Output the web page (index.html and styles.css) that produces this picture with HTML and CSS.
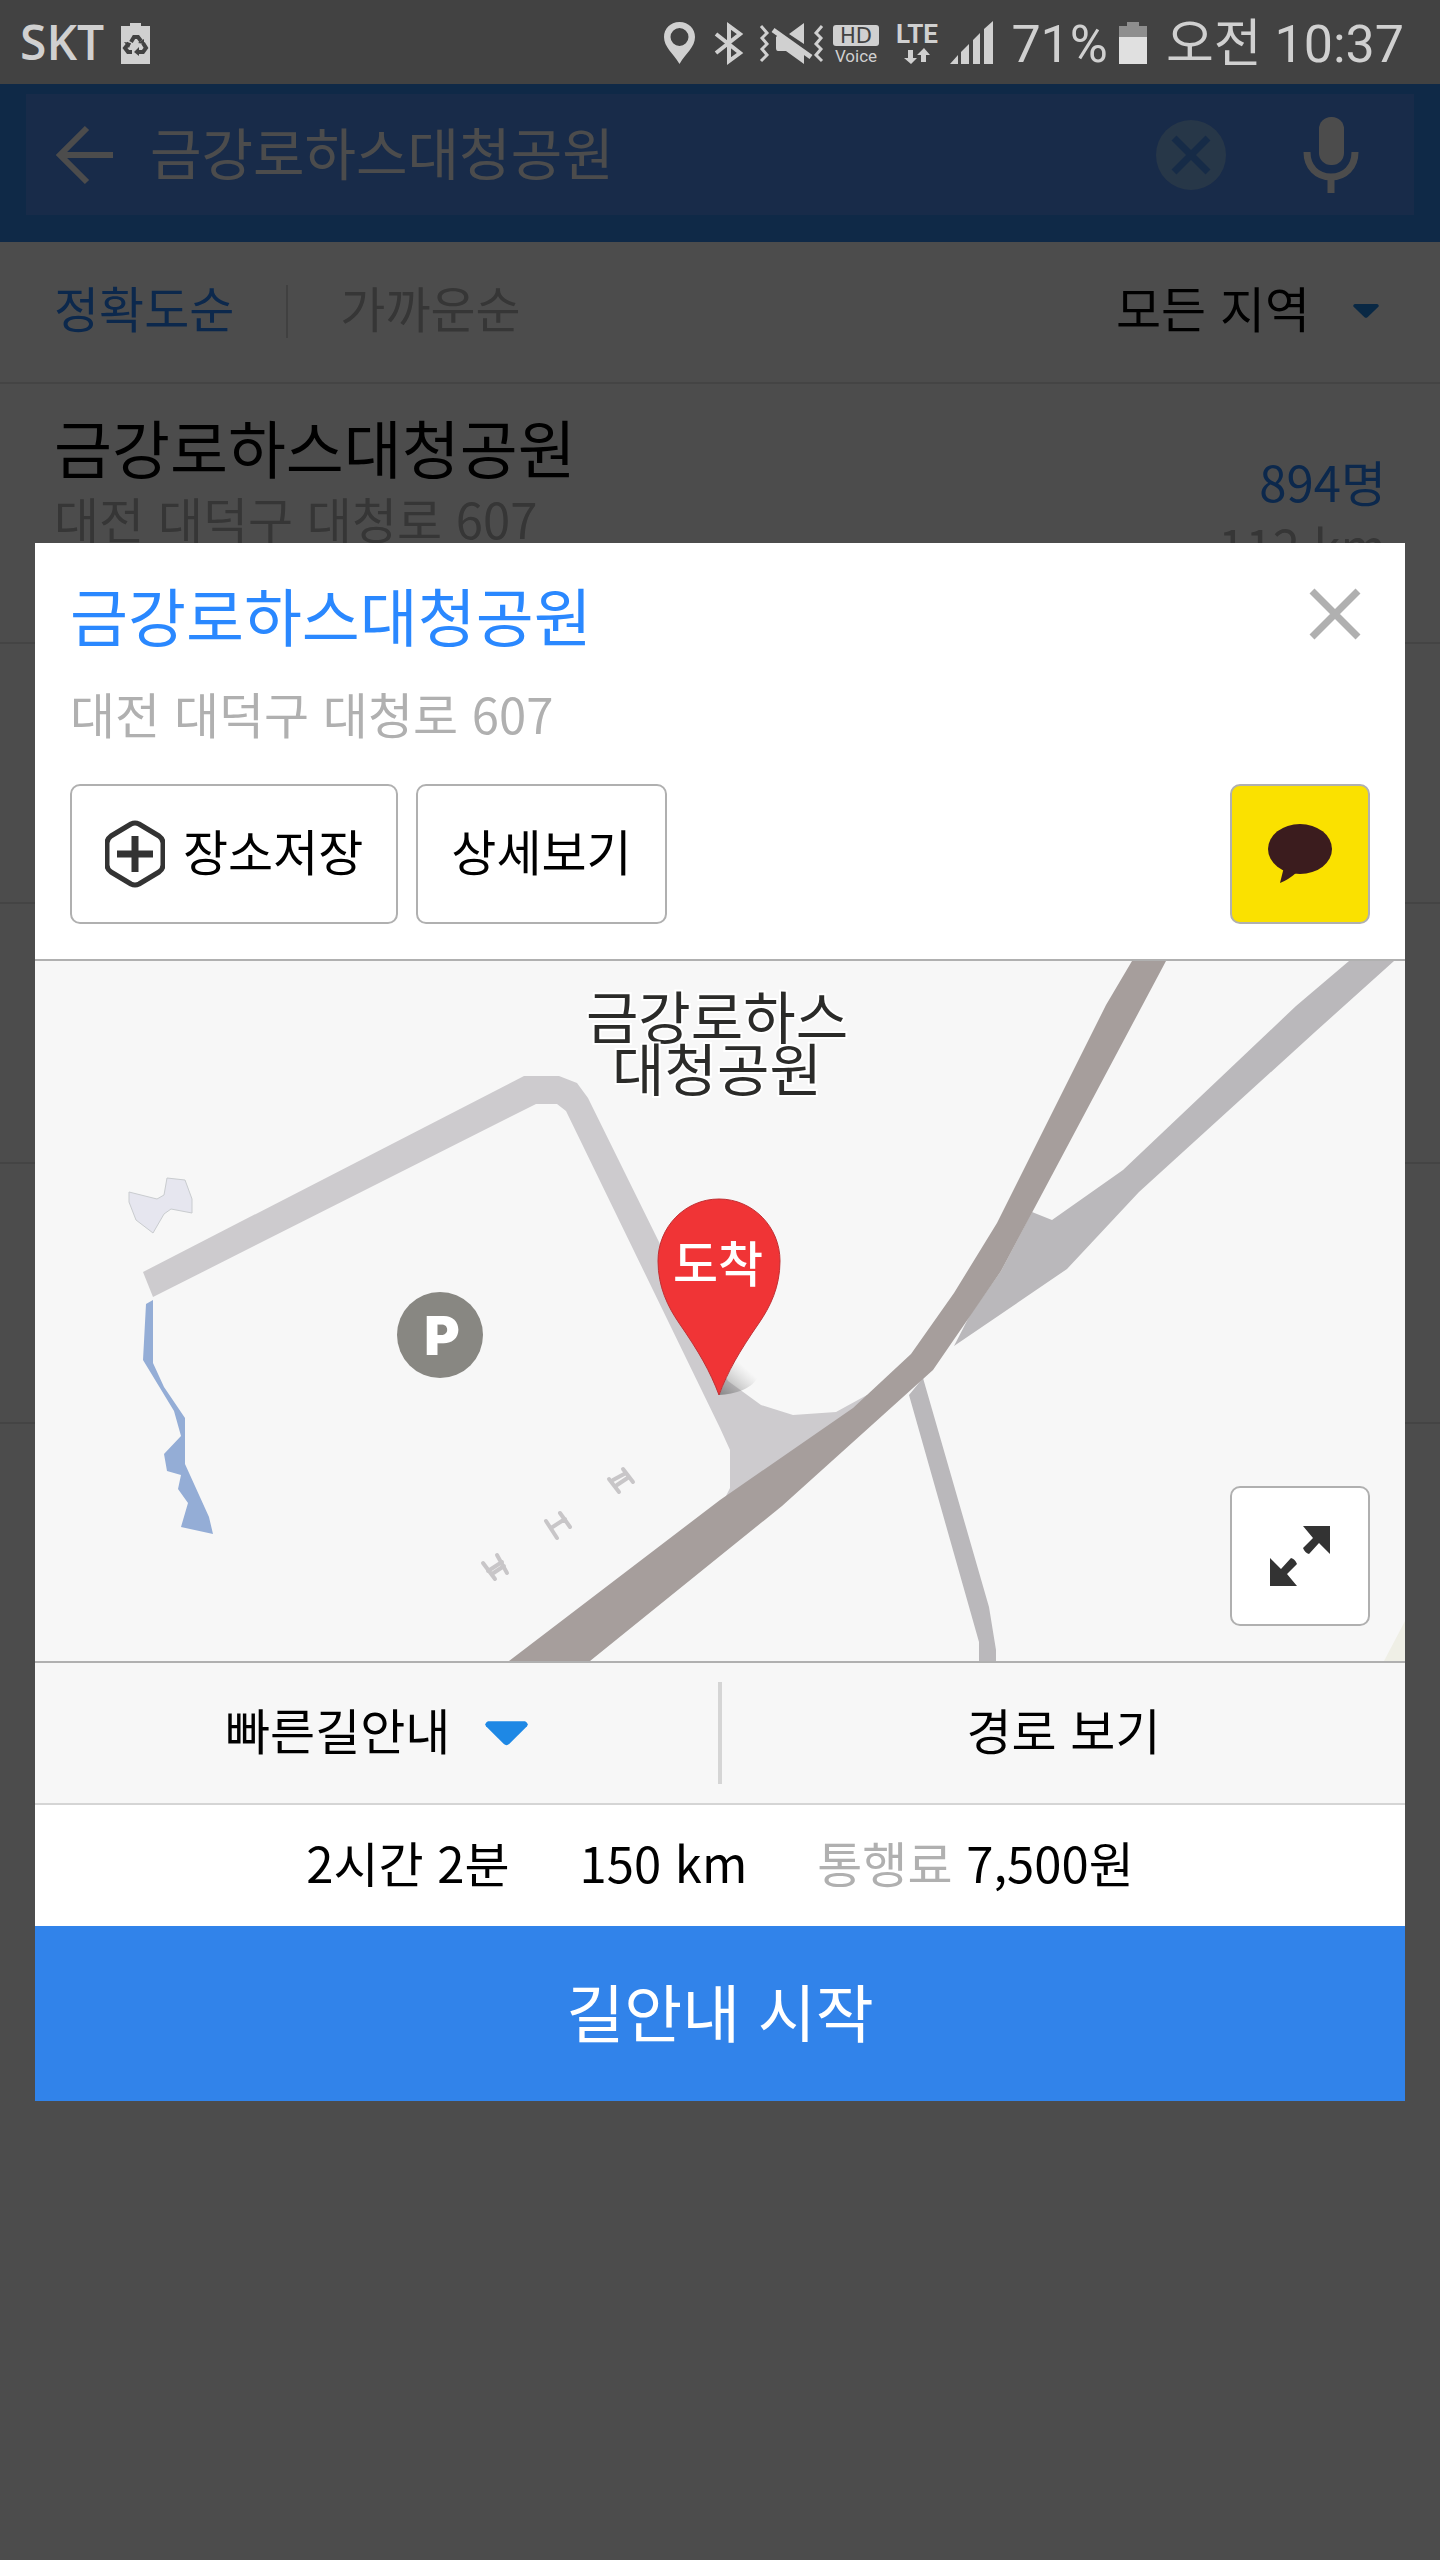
FILE: index.html
```
<!DOCTYPE html>
<html lang="ko">
<head>
    <meta charset="UTF-8">
    <meta name="viewport" content="width=device-width, initial-scale=1.0">
    <title>금강로하스대청공원</title>
    <link rel="stylesheet" href="styles.css">
</head>
<body>

    <div class="status-bar">
        <span class="carrier">SKT</span>
        <!-- battery saver -->
        <svg width="64" height="84" viewBox="0 0 64 84" fill="#d0d0d0">
            <path d="M17 26h9v-3h11v3h9v38H17z"/>
            <g fill="none" stroke="#424242" stroke-width="4">
                <path d="M27 42l3-5h4l3 4"/>
                <path d="M25 43l-4 5 3 4h4"/>
                <path d="M39 43l3 5-3 4h-5"/>
            </g>
            <path fill="#424242" d="M34 43l6-4v5zM20 42l7 1-2 5zM35 47v9l-5-4z"/>
        </svg>
        <div class="status-right">
            <!-- location -->
            <svg width="48" height="84" viewBox="0 0 48 84" fill="#d0d0d0">
                <path fill-rule="evenodd" d="M22.500 22C13 22 7 29 7 37c0 10 9 16 15.500 27C29 53 38 47 38 37c0-8-6-15-15.500-15zm0 6a9 9 0 0 1 0 18 9 9 0 0 1 0-18z"/>
            </svg>
            <!-- bluetooth -->
            <svg width="48" height="84" viewBox="0 0 48 84" fill="none" stroke="#d0d0d0" stroke-width="4">
                <path d="M11 34l24 19-11 8V26l11 8-24 19"/>
            </svg>
            <!-- sound off, vibrate -->
            <svg width="76" height="84" viewBox="0 0 76 84" fill="#d0d0d0">
                <path d="M36 34l15-11v21zM26 34l25 18v12L33 51h-8q-2 0-2-3V37z"/>
                <path d="M20 30l38 27" stroke="#d0d0d0" stroke-width="5"/>
                <path d="M8 26l6 7-5 5 5 6-5 5 5 6-6 6M69 26l-6 7 5 5-5 6 5 5-5 6 6 6" fill="none" stroke="#d0d0d0" stroke-width="3"/>
            </svg>
            <!-- HD voice -->
            <svg width="60" height="84" viewBox="0 0 60 84" fill="#d0d0d0">
                <rect x="4" y="25" width="46" height="21" rx="3"/>
                <text class="hd-text" x="27" y="43" text-anchor="middle">HD</text>
                <text class="voice-text" x="27" y="62" text-anchor="middle">Voice</text>
            </svg>
            <!-- LTE -->
            <svg width="56" height="84" viewBox="0 0 56 84" fill="#d0d0d0">
                <text class="lte-text" x="28" y="43" text-anchor="middle">LTE</text>
                <path d="M19 50h5v8h4l-6 6-7-6h4zM32 62h5v-7h4l-6-7-7 7h4z"/>
            </svg>
            <!-- signal -->
            <svg width="66" height="84" viewBox="0 0 66 84" fill="#d0d0d0">
                <path d="M5 64l8-9v9zM16 52l8-8v20h-8zM28 40l7-7v31h-7zM39 29l9-8v43h-9z"/>
            </svg>
            <span class="status-text">71%</span>
            <!-- battery -->
            <svg width="58" height="84" viewBox="0 0 58 84">
                <path fill="#8e8e8e" d="M11 26h8v-4h12v4h8v12H11z"/>
                <path fill="#e0e0e0" d="M11 37h28v27H11z"/>
            </svg>
            <span class="status-text">오전 10:37</span>
        </div>
    </div>

    <div class="screen">
        <header class="search-header">
            <form class="search-box">
                <button type="button" class="icon-button" aria-label="뒤로">
                    <svg width="58" height="60" viewBox="0 0 58 60" fill="none" stroke="#fff" stroke-width="6">
                        <path d="M31 3L4 30l27 27M4 30h53"/>
                    </svg>
                </button>
                <input type="text" class="search-input" aria-label="검색어" value="금강로하스대청공원">
                <button type="button" class="icon-button clear-button" aria-label="지우기">
                    <svg width="70" height="70" viewBox="0 0 70 70">
                        <circle cx="35" cy="35" r="35" fill="#84b7f0"/>
                        <path d="M18 18l34 34M52 18L18 52" stroke="#4a90ef" stroke-width="7"/>
                    </svg>
                </button>
                <button type="button" class="icon-button" aria-label="음성 검색">
                    <svg width="56" height="76" viewBox="0 0 56 76" fill="none" stroke="#fff" stroke-width="7">
                        <rect x="16" y="0" width="25" height="48" rx="12" fill="#fff" stroke="none"/>
                        <path d="M4 35c0 15 10 25 24 25s24-10 24-25M28 60v16"/>
                    </svg>
                </button>
            </form>
        </header>

        <div class="sort-bar">
            <button type="button" class="sort active">정확도순</button>
            <span class="sort-divider"></span>
            <button type="button" class="sort">가까운순</button>
            <label class="region">
                <select aria-label="지역">
                    <option>모든 지역</option>
                </select>
                <svg width="26" height="14" viewBox="0 0 44 25" preserveAspectRatio="none" fill="#1e88e5">
                    <path d="M3 0h38q4 2 2 5L25 23q-3 3-6 0L1 5Q-1 2 3 0z"/>
                </svg>
            </label>
        </div>

        <ul class="result-list">
            <li class="result">
                <div class="result-place">
                    <h2>금강로하스대청공원</h2>
                    <p>대전 대덕구 대청로 607</p>
                </div>
                <div class="result-info">
                    <span class="visitors">894명</span>
                    <span class="distance">112 km</span>
                </div>
            </li>
            <li class="result"></li>
            <li class="result"></li>
            <li class="result"></li>
        </ul>

        <div class="overlay">
            <section class="dialog" role="dialog" aria-labelledby="placeName">
                <div class="place">
                    <div class="place-title">
                        <h1 id="placeName">금강로하스대청공원</h1>
                        <button type="button" class="icon-button" aria-label="닫기">
                            <svg width="52" height="52" viewBox="0 0 52 52" stroke="#b0b0b0" stroke-width="7">
                                <path d="M3 3l46 46M49 3L3 49"/>
                            </svg>
                        </button>
                    </div>
                    <p class="address">대전 대덕구 대청로 607</p>
                    <div class="actions">
                        <button type="button" class="box-button">
                            <svg width="60" height="68" viewBox="0 0 60 68" fill="none" stroke="#333">
                                <path stroke-width="5" stroke-linejoin="round" d="M26 4q4-2 8 0l20 12q4 3 4 7v22q0 4-4 7L34 64q-4 2-8 0L6 52q-4-3-4-7V23q0-4 4-7z"/>
                                <path stroke-width="7" d="M12 34h36M30 16v36"/>
                            </svg>
                            <span>장소저장</span>
                        </button>
                        <button type="button" class="box-button"><span>상세보기</span></button>
                        <button type="button" class="box-button square kakao" aria-label="카카오톡 공유">
                            <svg width="64" height="60" viewBox="0 0 64 60" fill="#3b1c1e">
                                <ellipse cx="32" cy="25" rx="32" ry="25"/>
                                <path d="M16 43l-4 16q8-3 16-10z"/>
                            </svg>
                        </button>
                    </div>
                </div>

                <div class="map">
                    <svg class="map-canvas" viewBox="0 0 1370 700" preserveAspectRatio="xMidYMid slice">
                        <defs>
                            <linearGradient id="pinShadow" x1="0" y1="1" x2="1" y2="0">
                                <stop offset="0" stop-color="#666" stop-opacity="0.700"/>
                                <stop offset="0.700" stop-color="#999" stop-opacity="0"/>
                            </linearGradient>
                        </defs>
                        <!-- ground -->
                        <polygon fill="#efefe6" points="1370,660 1349,700 1370,700"/>
                        <polygon fill="#e6e6ef" stroke="#c9cccf" stroke-width="1" points="132,217 150,219 157,238 157,252 136,248 129,253 118,272 101,259 94,241 94,231 122,238 129,234"/>
                        <polygon fill="#94add6" points="111,343 118,339 118,402 129,426 150,457 150,503 174,556 178,573 146,566 153,542 143,528 146,514 132,510 129,493 146,475 139,450 108,399"/>
                        <!-- roads -->
                        <polygon fill="#cdcbce" points="108,311 489,115 524,115 542,122 553,137 624,281 693,420 726,444 758,454 801,451 832,434 850,440 700,540 691,535 695,527 695,489 685,467 531,150 522,143 501,143 118,336"/>
                        <polygon fill="#bab8bb" points="1314,0 1261,45 1088,209 1017,259 997,251 966,310 935,354 919,385 1032,308 1104,231 1280,71 1359,0"/>
                        <polygon fill="#bab8bb" points="888,417 954,646 961,689 961,700 944,700 944,681 874,434"/>
                        <polygon fill="#a69e9c" points="1097,0 1071,44 962,262 919,332 876,393 818,447 685,539 474,700 555,700 685,595 747,545 898,409 966,310 1131,0"/>
                        <!-- parking bollards -->
                        <g fill="none" stroke="#c8c6c8" stroke-width="4" stroke-linecap="round">
                            <path d="M511 560l11 17M525 552l10 14M516 567l14-9"/>
                            <path d="M448 602l12 16M462 594l10 18M453 610l14-9M457 613l12-8"/>
                            <path d="M574 518l10 13M588 508l10 13M578 519l13-7M582 524l12-8"/>
                        </g>
                        <circle cx="405" cy="374" r="43" fill="#888782"/>
                        <text class="parking-text" x="407" y="394" text-anchor="middle">P</text>
                        <text class="map-label" x="682" y="78" text-anchor="middle">금강로하스</text>
                        <text class="map-label" x="682" y="130" text-anchor="middle">대청공원</text>
                        <!-- destination pin -->
                        <path fill="url(#pinShadow)" d="M684 434l14-32c12-8 32-4 26 12-6 14-24 19-40 20z"/>
                        <path fill="#f03436" stroke="#c03034" stroke-width="1" d="M684 238c34 0 61 28 61 62 0 26-10 46-21 62-20 29-31 48-40 72-9-24-20-43-40-72-11-16-21-36-21-62 0-34 27-62 61-62z"/>
                        <text class="pin-text" x="683" y="321" text-anchor="middle">도착</text>
                    </svg>
                    <button type="button" class="box-button square expand" aria-label="지도 확대">
                        <svg width="60" height="60" viewBox="0 0 60 60" fill="#333">
                            <path d="M33 0h27v28L49 17 39 28q-4-1-6-6l10-10z"/>
                            <path d="M27 60H0V32l11 11 10-11q4 1 6 6L17 48z"/>
                        </svg>
                    </button>
                </div>

                <div class="route-options">
                    <label class="route-type">
                        <select aria-label="경로 종류">
                            <option>빠른길안내</option>
                        </select>
                        <svg width="43" height="25" viewBox="0 0 44 25" fill="#1e88e5">
                            <path d="M3 0h38q4 2 2 5L25 23q-3 3-6 0L1 5Q-1 2 3 0z"/>
                        </svg>
                    </label>
                    <span class="route-divider"></span>
                    <button type="button" class="route-view">경로 보기</button>
                </div>

                <div class="trip">
                    <span>2시간 2분</span>
                    <span>150 km</span>
                    <span><span class="toll">통행료</span> 7,500원</span>
                </div>

                <button type="button" class="start-button">길안내 시작</button>
            </section>
        </div>
    </div>

</body>
</html>
```
FILE: styles.css
```
* {
    box-sizing: border-box;
}
body {
    margin: 0;
    min-height: 100vh;
    display: flex;
    flex-direction: column;
    font-family: "Noto Sans CJK KR", sans-serif;
    font-size: 49px;
    line-height: 72px;
    color: #000;
    background-color: #fff;
}
h1, h2, p, ul {
    margin: 0;
    padding: 0;
    font-weight: 400;
}
button, input, select {
    font: inherit;
    color: inherit;
    margin: 0;
    padding: 0;
    border: none;
    background: none;
}
select {
    appearance: none;
}
button {
    cursor: pointer;
}
svg {
    display: block;
    flex-shrink: 0;
}

/* Hangul sits low in its line box, lift it in the bars and buttons */
select, .search-input, .sort, .box-button span, .route-view, .trip, .start-button {
    padding-bottom: 8px;
}

/* Status bar */
.status-bar {
    display: flex;
    align-items: center;
    height: 84px;
    padding: 0 36px 0 20px;
    background-color: #424242;
    color: #d0d0d0;
    font-family: Roboto, "Noto Sans CJK KR", sans-serif;
    font-size: 52px;
}
.carrier {
    font-family: "Open Sans", sans-serif;
    font-size: 48px;
    font-weight: 600;
}
.status-right {
    display: flex;
    align-items: center;
    margin-left: auto;
}
.status-text {
    padding-top: 6px;
}
.hd-text {
    font-family: "DejaVu Sans", sans-serif;
    font-size: 21px;
    fill: #424242;
}
.voice-text {
    font-size: 17px;
}
.lte-text {
    font-size: 26px;
    font-weight: 700;
}

/* Search screen */
.screen {
    position: relative;
    flex: 1;
}
.search-header {
    padding: 10px 26px 27px;
    background-color: #3289ed;
}
.search-box {
    display: flex;
    align-items: center;
    height: 121px;
    padding: 0 55px 0 30px;
    background-color: #508ff3;
}
.icon-button {
    display: flex;
    align-items: center;
}
.search-input {
    flex: 1;
    min-width: 0;
    padding-left: 36px;
    font-size: 56px;
    color: #fff;
    outline: none;
}
.clear-button {
    margin-right: 77px;
}
.sort-bar {
    display: flex;
    align-items: center;
    gap: 52px;
    height: 142px;
    padding: 0 61px 2px 54px;
    border-bottom: 2px solid #e4e4e4;
}
.sort {
    color: #b4b4b4;
}
.sort.active {
    color: #2a88ff;
}
.sort-divider {
    width: 2px;
    height: 53px;
    background-color: #d8d8d8;
}
.region {
    display: flex;
    align-items: center;
    gap: 45px;
    margin-left: auto;
}
.result-list {
    list-style: none;
}
.result {
    display: flex;
    justify-content: space-between;
    height: 260px;
    padding: 26px 54px;
    border-bottom: 2px solid #e4e4e4;
}
.result h2 {
    font-size: 63px;
}
.result p, .distance {
    color: #b4b4b4;
}
.result-info {
    display: flex;
    flex-direction: column;
    justify-content: center;
    text-align: right;
    line-height: 64px;
}
.visitors {
    color: #2a88ff;
}

/* Place dialog */
.overlay {
    position: absolute;
    inset: 0;
    display: flex;
    align-items: center;
    padding: 35px;
    background-color: rgba(0, 0, 0, 0.7);
}
.dialog {
    flex: 1;
    min-width: 0;
    background-color: #fff;
}
.place {
    padding: 35px;
    border-bottom: 2px solid #b0b0b0;
}
.place-title {
    display: flex;
    align-items: center;
    justify-content: space-between;
    padding-right: 9px;
}
.place-title h1 {
    font-size: 63px;
    color: #2a88ff;
}
.address {
    margin: 27px 0 35px;
    color: #b0b0b0;
}
.actions {
    display: flex;
    gap: 18px;
}
.box-button {
    display: flex;
    align-items: center;
    justify-content: center;
    gap: 18px;
    height: 140px;
    padding: 0 33px;
    border: 2px solid #b0b0b0;
    border-radius: 10px;
    background-color: #fff;
}
.square {
    width: 140px;
    padding: 0;
}
.kakao {
    margin-left: auto;
    background-color: #fae100;
}

.map {
    position: relative;
    height: 700px;
    background-color: #f7f7f7;
}
.map-canvas {
    width: 100%;
    height: 100%;
}
.map-label {
    font-size: 57px;
    fill: #2b2b29;
    stroke: #fff;
    stroke-width: 4px;
    paint-order: stroke;
}
.parking-text {
    font-family: Inter, sans-serif;
    font-size: 54px;
    font-weight: 900;
    fill: #fff;
}
.pin-text {
    font-size: 49px;
    font-weight: 500;
    fill: #fff;
}
.expand {
    position: absolute;
    right: 35px;
    bottom: 35px;
}

.route-options {
    display: flex;
    align-items: center;
    height: 144px;
    border-top: 2px solid #b0b0b0;
    border-bottom: 2px solid #d5d5d5;
    background-color: #f7f7f7;
}
.route-type, .route-view {
    flex: 1;
    display: flex;
    align-items: center;
    justify-content: center;
    gap: 34px;
}
.route-divider {
    width: 4px;
    height: 102px;
    background-color: #d5d5d5;
}
.trip {
    display: flex;
    align-items: center;
    justify-content: center;
    gap: 70px;
    height: 121px;
}
.toll {
    color: #b0b0b0;
}
.start-button {
    display: block;
    width: 100%;
    height: 175px;
    font-size: 63px;
    color: #fff;
    background-color: #3183ea;
}
```
